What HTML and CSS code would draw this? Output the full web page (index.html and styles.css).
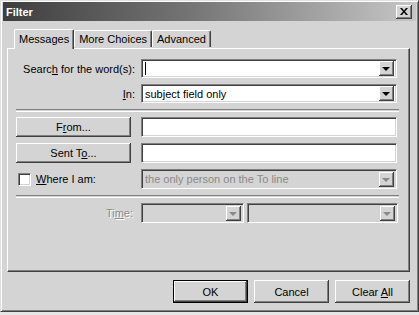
FILE: index.html
```html
<!DOCTYPE html>
<html lang="en">
<head>
    <meta charset="UTF-8">
    <title>Filter</title>
    <link rel="stylesheet" href="styles.css">
</head>
<body>
    <div class="window">
        <div class="titlebar">
            <span class="title">Filter</span>
            <button class="close" aria-label="Close">
                <svg width="8" height="7" viewBox="0 0 8 7"><path d="M0 0h2l2 2.5L6 0h2L5 3.5 8 7H6L4 4.5 2 7H0l3-3.5z" fill="#000"/></svg>
            </button>
        </div>

        <div class="tabs">
            <div class="tab active">Messages</div>
            <div class="tab">More Choices</div>
            <div class="tab">Advanced</div>
        </div>

        <div class="panel">
            <div class="row">
                <label class="label">Searc<u>h</u> for the word(s):</label>
                <div class="combo">
                    <span class="combo-text"><span class="caret"></span></span>
                    <span class="drop"><span class="arrow"></span></span>
                </div>
            </div>
            <div class="row">
                <label class="label"><u>I</u>n:</label>
                <div class="combo">
                    <span class="combo-text">subject field only</span>
                    <span class="drop"><span class="arrow"></span></span>
                </div>
            </div>

            <div class="separator"></div>

            <div class="row tall">
                <button class="btn wide">F<u>r</u>om...</button>
                <div class="field"></div>
            </div>
            <div class="row tall">
                <button class="btn wide">Sent T<u>o</u>...</button>
                <div class="field"></div>
            </div>
            <div class="row tall">
                <label class="check-label"><span class="checkbox"></span><u>W</u>here I am:</label>
                <div class="combo disabled">
                    <span class="combo-text">the only person on the To line</span>
                    <span class="drop"><span class="arrow"></span></span>
                </div>
            </div>

            <div class="separator second"></div>

            <div class="row tall">
                <label class="label time disabled-text">Ti<u>m</u>e:</label>
                <div class="combo disabled small">
                    <span class="combo-text"></span>
                    <span class="drop"><span class="arrow"></span></span>
                </div>
                <div class="combo disabled medium">
                    <span class="combo-text"></span>
                    <span class="drop"><span class="arrow"></span></span>
                </div>
            </div>
        </div>

        <div class="actions">
            <button class="btn default">OK</button>
            <button class="btn">Cancel</button>
            <button class="btn">Clear <u>A</u>ll</button>
        </div>
    </div>
</body>
</html>
```

FILE: styles.css
```css
body {
    margin: 0;
    background-color: #e6e6e6;
    font-family: 'Liberation Sans', Arial, sans-serif;
    font-size: 11px;
    color: #000;
}
.window {
    width: 419px;
    height: 312px;
    box-sizing: border-box;
    background-color: #d4d4d4;
    border: 1px solid;
    border-color: #e0e0e0 #404040 #404040 #e0e0e0;
    box-shadow: inset 1px 1px #fff, inset -1px -1px #808080;
    padding: 1px 2px 2px 2px;
}
.titlebar {
    height: 19px;
    display: flex;
    align-items: center;
    justify-content: space-between;
    padding: 0 4px 0 3px;
    background: linear-gradient(to right, #3e3e3e 0%, #747474 45%, #c6c6c6 100%);
}
.title {
    color: #fff;
    font-weight: bold;
    font-size: 11px;
}
.close {
    width: 16px;
    height: 14px;
    padding: 0;
    border: none;
    background-color: #d4d4d4;
    box-shadow: inset -1px -1px #404040, inset 1px 1px #fff, inset -2px -2px #808080;
    display: flex;
    align-items: center;
    justify-content: center;
}

/* pestañas */
.tabs {
    display: flex;
    align-items: flex-end;
    margin: 7px 0 0 11px;
    height: 20px;
    position: relative;
    z-index: 1;
}
.tab {
    height: 16px;
    line-height: 16px;
    padding: 0 4px;
    border-top: 1px solid #fff;
    border-left: 1px solid #fff;
    border-right: 1px solid #404040;
    border-radius: 2px 2px 0 0;
    box-shadow: inset -1px 0 #808080;
    margin-bottom: 1px;
}
.tab.active {
    height: 19px;
    line-height: 18px;
    padding: 0 4px;
    margin-bottom: -1px;
    background-color: #d4d4d4;
}
.panel {
    margin: 0 6px 0 4px;
    height: 224px;
    box-sizing: border-box;
    border: 1px solid;
    border-color: #fff #404040 #404040 #fff;
    box-shadow: inset -1px -1px #808080;
    padding: 10px 10px 0 8px;
}
.row {
    display: flex;
    align-items: center;
    height: 19px;
    margin-bottom: 6px;
}
.row.tall {
    height: 20px;
}
.label {
    width: 119px;
    margin-right: 6px;
    text-align: right;
}
.check-label {
    width: 123px;
    margin-right: 2px;
    display: flex;
    align-items: center;
    padding-left: 2px;
    box-sizing: border-box;
}
.checkbox {
    width: 13px;
    height: 13px;
    box-sizing: border-box;
    background-color: #fff;
    border: 1px solid;
    border-color: #808080 #fff #fff #808080;
    box-shadow: inset 1px 1px #404040, inset -1px -1px #d4d4d4;
    margin-right: 5px;
}

/* combos y campos */
.combo, .field {
    width: 256px;
    height: 19px;
    box-sizing: border-box;
    background-color: #fff;
    border: 1px solid;
    border-color: #808080 #fff #fff #808080;
    box-shadow: inset 1px 1px #404040, inset -1px -1px #d4d4d4;
    display: flex;
    align-items: center;
    padding: 2px;
}
.field {
    height: 20px;
}
.combo-text {
    flex: 1;
    padding-left: 1px;
    white-space: nowrap;
    overflow: hidden;
}
.caret {
    display: inline-block;
    width: 1px;
    height: 13px;
    background-color: #000;
    vertical-align: middle;
}
.drop {
    width: 15px;
    height: 15px;
    box-sizing: border-box;
    background-color: #d4d4d4;
    box-shadow: inset -1px -1px #404040, inset 1px 1px #fff, inset -2px -2px #808080;
    display: flex;
    align-items: center;
    justify-content: center;
}
.arrow {
    width: 0;
    height: 0;
    border-left: 4px solid transparent;
    border-right: 4px solid transparent;
    border-top: 4px solid #000;
    margin: 1px 0 0 -1px;
}
.combo.disabled {
    height: 20px;
    background-color: #d4d4d4;
    color: #8a8a8a;
}
.combo.disabled .arrow {
    border-top-color: #8a8a8a;
}
.combo.small {
    width: 103px;
    margin-right: 3px;
}
.combo.medium {
    width: 151px;
}
.disabled-text {
    color: #8a8a8a;
    text-shadow: 1px 1px #fff;
}
.time {
    width: 117px;
    margin-right: 8px;
}
.separator {
    height: 1px;
    border-top: 1px solid #808080;
    border-bottom: 1px solid #fff;
    margin: 3px 0 5px 0;
}
.separator.second {
    margin: 0 0 5px 0;
}

/* botones */
.btn {
    font-family: inherit;
    font-size: 11px;
    color: #000;
    background-color: #d4d4d4;
    border: none;
    box-shadow: inset -1px -1px #404040, inset 1px 1px #fff, inset -2px -2px #808080;
    width: 75px;
    height: 23px;
    padding: 0;
}
.btn.wide {
    width: 115px;
    height: 20px;
    margin-right: 10px;
}
.btn.default {
    box-shadow: inset 0 0 0 1px #000, inset -2px -2px #404040, inset 2px 2px #fff, inset -3px -3px #808080;
}
.actions {
    display: flex;
    justify-content: flex-end;
    gap: 6px;
    margin: 8px 6px 0 0;
}
```
